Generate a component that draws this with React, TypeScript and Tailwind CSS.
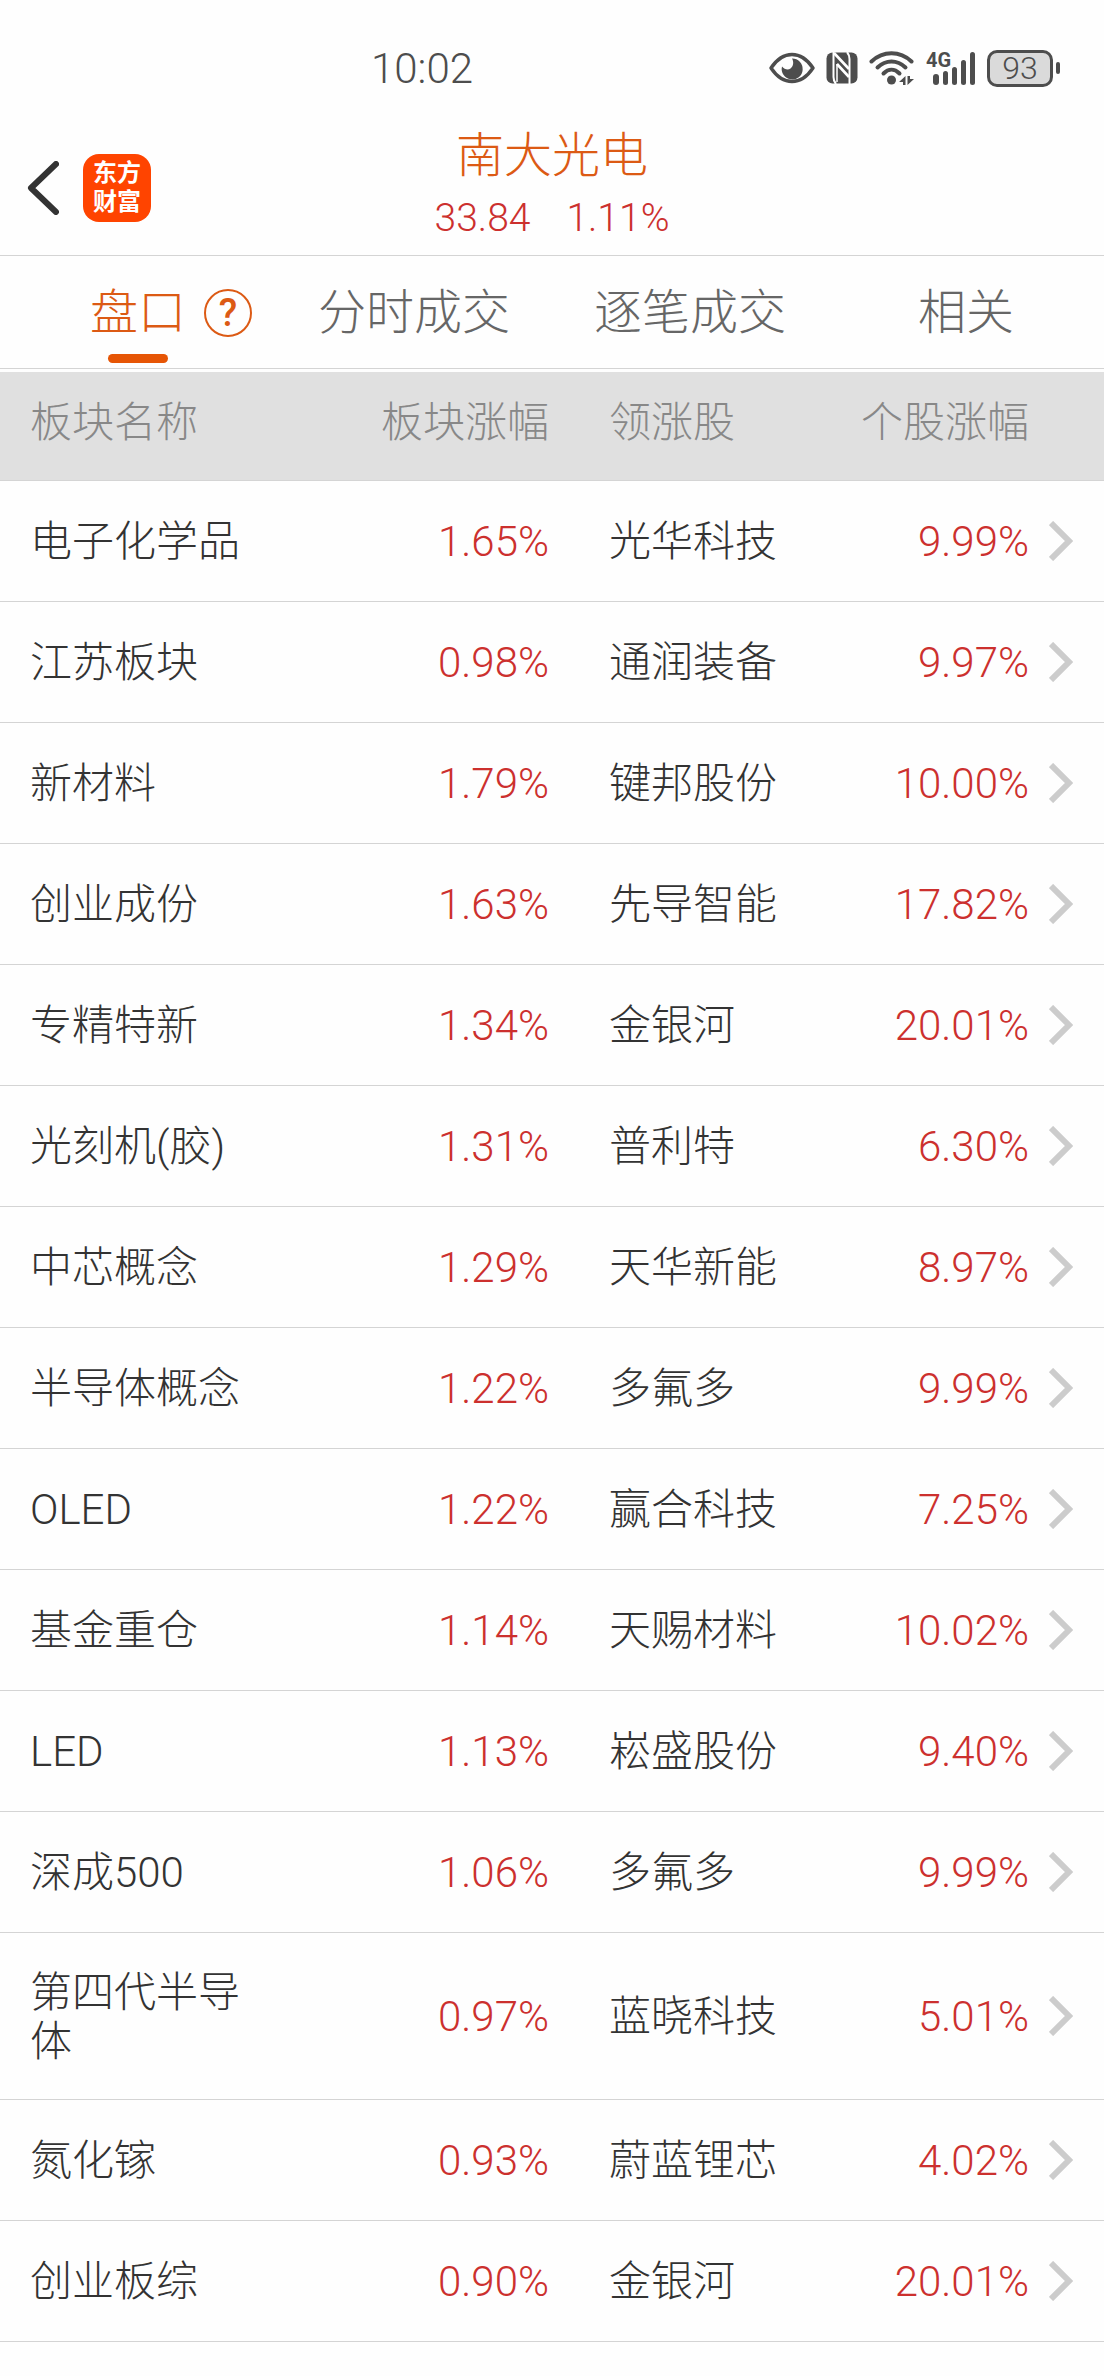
interface Sector {
    name: string
    change: string
    leader: string
    leaderChange: string
}

const sectors: Sector[] = [
    { name: '电子化学品', change: '1.65%', leader: '光华科技', leaderChange: '9.99%' },
    { name: '江苏板块', change: '0.98%', leader: '通润装备', leaderChange: '9.97%' },
    { name: '新材料', change: '1.79%', leader: '键邦股份', leaderChange: '10.00%' },
    { name: '创业成份', change: '1.63%', leader: '先导智能', leaderChange: '17.82%' },
    { name: '专精特新', change: '1.34%', leader: '金银河', leaderChange: '20.01%' },
    { name: '光刻机(胶)', change: '1.31%', leader: '普利特', leaderChange: '6.30%' },
    { name: '中芯概念', change: '1.29%', leader: '天华新能', leaderChange: '8.97%' },
    { name: '半导体概念', change: '1.22%', leader: '多氟多', leaderChange: '9.99%' },
    { name: 'OLED', change: '1.22%', leader: '赢合科技', leaderChange: '7.25%' },
    { name: '基金重仓', change: '1.14%', leader: '天赐材料', leaderChange: '10.02%' },
    { name: 'LED', change: '1.13%', leader: '崧盛股份', leaderChange: '9.40%' },
    { name: '深成500', change: '1.06%', leader: '多氟多', leaderChange: '9.99%' },
    { name: '第四代半导体', change: '0.97%', leader: '蓝晓科技', leaderChange: '5.01%' },
    { name: '氮化镓', change: '0.93%', leader: '蔚蓝锂芯', leaderChange: '4.02%' },
    { name: '创业板综', change: '0.90%', leader: '金银河', leaderChange: '20.01%' },
]

const tabs = ['盘口', '分时成交', '逐笔成交', '相关']

const EyeIcon = () => (
    <svg width="46" height="32" viewBox="0 0 46 32" fill="none">
        <path d="M2 16C8 7 15 2.5 23 2.5S38 7 44 16C38 25 31 29.5 23 29.5S8 25 2 16Z" stroke="#4d4d4d" strokeWidth="3.4" strokeLinejoin="round" />
        <path d="M23 6.5A10.5 10.5 0 1 1 13 14.5C15.5 17.5 19 18.5 21.5 16.5C24.5 14 25 10 23 6.5Z" fill="#4d4d4d" />
    </svg>
)

const NfcIcon = () => (
    <svg width="32" height="32" viewBox="0 0 32 32" fill="none">
        <rect x="0.5" y="0.5" width="31" height="31" rx="6" fill="#4d4d4d" />
        <path d="M7.5 0V25Q7.5 29 10 32M23.5 32V7Q23.5 3 21 0" stroke="#fff" strokeWidth="2" />
        <path d="M8 1 23 17M11 12 23 25" stroke="#fff" strokeWidth="2.6" />
        <path d="M11 12V30" stroke="#fff" strokeWidth="1.5" />
    </svg>
)

const WifiIcon = () => (
    <svg width="46" height="36" viewBox="0 0 46 36" fill="none">
        <g stroke="#4d4d4d" strokeWidth="4" strokeLinecap="round">
            <path d="M2.5 11.5C14 0.5 31 0.5 42.5 11.5" />
            <path d="M8.5 17.5C17 9.5 28 9.5 36.5 17.5" />
            <path d="M14.5 23.5C19.5 18.5 25.5 18.5 30.5 23.5" />
        </g>
        <circle cx="22.5" cy="30" r="4.5" fill="#4d4d4d" />
        <path d="M36.5 26v9h-2.500v-3h-4ZM38.500 35v-9h2.500v3h4Z" fill="#4d4d4d" />
    </svg>
)

const SignalIcon = () => (
    <svg width="50" height="44" viewBox="0 -4 50 44" fill="#4d4d4d">
        <text x="0" y="17" fontSize="20" fontWeight="700" fontFamily="Roboto, sans-serif">4G</text>
        <rect x="7" y="24" width="6" height="11" rx="3" />
        <rect x="17" y="21" width="5" height="14" rx="2.5" />
        <rect x="26" y="17" width="5" height="18" rx="2.5" />
        <rect x="35" y="10" width="5" height="25" rx="2.5" />
        <rect x="44" y="2" width="5" height="33" rx="2.5" />
    </svg>
)

const Battery = () => (
    <div className="flex items-center gap-[3px]">
        <div className="flex h-[37px] w-[66px] items-center justify-center rounded-[10px] border-[3px] border-[#4d4d4d] bg-[#dadada] text-[32px] leading-none">
            93
        </div>
        <div className="h-3 w-1 rounded-sm bg-[#4d4d4d]" />
    </div>
)

const StatusBar = () => (
    <div className="flex h-[120px] items-center justify-between pt-4 pr-11 pl-[371px] text-[#4d4d4d]">
        <span className="text-[42px]">10:02</span>
        <div className="flex items-center gap-[11px]">
            <EyeIcon />
            <NfcIcon />
            <WifiIcon />
            <SignalIcon />
            <Battery />
        </div>
    </div>
)

const TitleBar = () => (
    <header className="grid h-[136px] grid-cols-[1fr_auto_1fr] items-center border-b border-[#d4d4d4]">
        <div className="flex items-center gap-6 pl-[27px]">
            <button type="button" aria-label="返回">
                <svg width="32" height="54" viewBox="0 0 32 54" fill="none">
                    <path d="M29 3 4 27 29 51" stroke="#333" strokeWidth="6" strokeLinecap="round" strokeLinejoin="round" />
                </svg>
            </button>
            <div className="flex size-[68px] flex-col items-center justify-center rounded-2xl bg-[#ff4400] text-2xl leading-[29px] font-bold text-white">
                <span>东方</span>
                <span>财富</span>
            </div>
        </div>
        <div className="flex flex-col items-center pb-1">
            <h1 className="text-[48px] leading-[64px] text-[#dc5a14]">南大光电</h1>
            <div className="flex gap-9 text-[39px] leading-[60px] text-[#cc302e]">
                <span>33.84</span>
                <span>1.11%</span>
            </div>
        </div>
    </header>
)

const TabBar = () => (
    <nav className="grid h-[113px] grid-cols-4 border-b border-[#d4d4d4]">
        {tabs.map((tab, index) => (
            <button
                key={tab}
                type="button"
                className={index === 0 ? 'relative pt-[2px] text-[48px] text-[#dc5a14]' : 'relative pt-[2px] text-[48px] text-[#666]'}
            >
                <span className="relative">
                    {tab}
                    {index === 0 && (
                        <span className="absolute top-1/2 left-full ml-[18px] flex size-12 -translate-y-1/2 items-center justify-center rounded-full border-2 border-[#dc5a14] text-[38px] leading-none font-medium">
                            ?
                        </span>
                    )}
                </span>
                {index === 0 && (
                    <span className="absolute bottom-[5px] left-1/2 h-[9px] w-15 -translate-x-1/2 rounded-full bg-[#e65505]" />
                )}
            </button>
        ))}
    </nav>
)

const SectorTable = () => (
    <table className="mt-[3px] w-full table-fixed text-left text-[42px] leading-[49px]">
        <thead>
            <tr className="h-[108px] border-b border-[#d4d4d4] bg-[#e0e0e0] text-[#888]">
                <th className="w-[23%] pb-[6px] pl-[30px] font-light">板块名称</th>
                <th className="w-[27%] pr-[3px] pb-[6px] text-right font-light">板块涨幅</th>
                <th className="w-[22%] pb-[6px] pl-[57px] font-light">领涨股</th>
                <th className="pb-[6px] text-right font-light">个股涨幅</th>
                <th className="w-[75px]" />
            </tr>
        </thead>
        <tbody>
            {sectors.map((sector) => (
                <tr key={sector.name} className="h-[121px] border-b border-[#d4d4d4] text-[#333]">
                    <td className="pt-[35px] pb-[33px] pl-[30px]">{sector.name}</td>
                    <td className="pt-[2px] pr-[3px] text-right text-[#cc302e]">{sector.change}</td>
                    <td className="pt-[2px] pl-[57px]">{sector.leader}</td>
                    <td className="pt-[2px] text-right text-[#cc302e]">{sector.leaderChange}</td>
                    <td className="pl-5">
                        <a href="#" aria-label={sector.name}>
                            <svg className="block" width="24" height="40" viewBox="0 0 24 40" fill="none">
                                <path d="M2 2 20 20 2 38" stroke="#ccc" strokeWidth="6" />
                            </svg>
                        </a>
                    </td>
                </tr>
            ))}
        </tbody>
    </table>
)

const App = () => {
    return (
        <div className="min-h-screen bg-[#fefefe] font-[Roboto,'Noto_Sans_CJK_SC',sans-serif] font-light">
            <StatusBar />
            <TitleBar />
            <TabBar />
            <SectorTable />
        </div>
    )
}

export default App
